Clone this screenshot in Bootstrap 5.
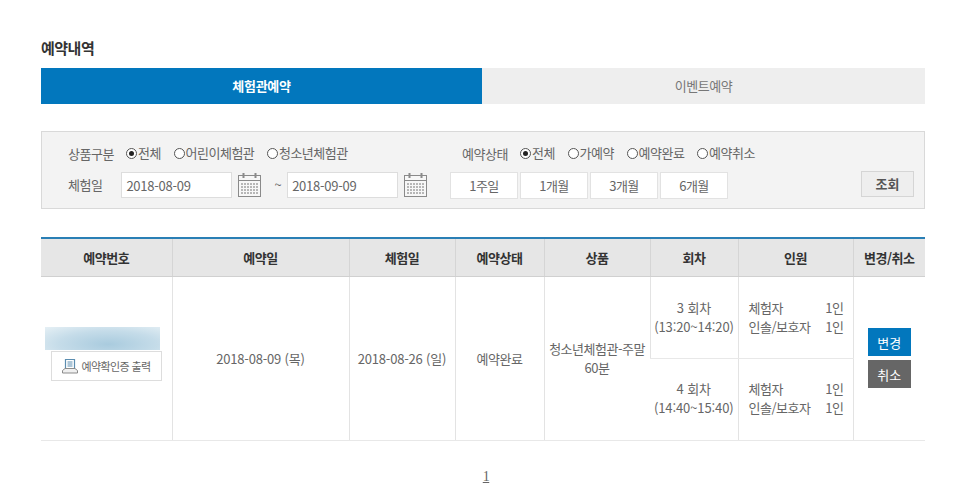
<!DOCTYPE html>
<html lang="ko">
<head>
  <meta charset="UTF-8">
  <title>예약내역</title>
  <link href="https://cdn.jsdelivr.net/npm/bootstrap@5.3.0/dist/css/bootstrap.min.css" rel="stylesheet">
  <script src="https://cdn.jsdelivr.net/npm/bootstrap@5.3.0/dist/js/bootstrap.bundle.min.js"></script>
  <style>
    body {
      font-family: "Noto Sans CJK KR", "Noto Sans", sans-serif;
      font-size: 13px;
      color: #666;
      background: #fff;
      letter-spacing: -0.5px;
    }
    .page-wrap { width: 884px; margin-left: 41px; padding-top: 38px; }
    .page-title { font-size: 15px; font-weight: 700; color: #333; line-height: 20px; margin: 0 0 10px; letter-spacing: -0.5px; }
    .tab-row { height: 36px; }
    .tab-item { display: flex; align-items: center; justify-content: center; text-decoration: none; }
    .tab-on { width: 441px; background: #0277bd; color: #fff; font-weight: 700; letter-spacing: -0.3px; }
    .tab-off { flex: 1; background: #eee; color: #777; }
    .filter-box {
      margin-top: 27px; height: 78px; background: #f3f3f3; border: 1px solid #d9d9d9;
      padding: 11px 10px 0 26px;
    }
    .filter-line { height: 20px; line-height: 20px; }
    .filter-line2 { height: 28px; margin-top: 9px; }
    .filter-left { width: 382px; flex: none; }
    .filter-label { margin-right: 9px; }
    .date-label { margin-right: 19px; }
    .radio-opt { margin-right: 9.5px; display: inline-flex; align-items: center; }
    .radio-mark {
      width: 11px; height: 11px; border: 1px solid #555; border-radius: 50%; margin-right: 1px;
      display: inline-block; background: #fff; position: relative;
    }
    .radio-mark.on::after {
      content: ""; position: absolute; left: 2px; top: 2px; width: 5px; height: 5px; border-radius: 50%; background: #222;
    }
    .status-group { margin-left: 12px; }
    .date-box {
      width: 111px; height: 26px; background: #fff; border: 1px solid #ddd; padding: 0 4px;
      font: inherit; color: #666; letter-spacing: -0.25px;
    }
    .cal-ico { width: 25px; height: 26px; margin-left: 5px; flex: none; }
    .tilde { margin: 0 6px 0 12px; }
    .period-btn {
      width: 68px; height: 27px; margin-right: 2px; background: #fff; border: 1px solid #e2e2e2;
      font: inherit; color: #666; padding: 0; letter-spacing: inherit;
    }
    .search-btn {
      width: 53px; height: 26px; background: #eee; border: 1px solid #d5d5d5;
      font: inherit; font-weight: 700; color: #555; padding: 0; margin-top: -1px;
    }
    .resv-table { width: 884px; margin-top: 28px; table-layout: fixed; border-collapse: collapse; border-top: 2px solid #2a7fb5; }
    .resv-table th {
      height: 38px; background: #e6e6e6; color: #333; font-weight: 700; text-align: center;
      border-left: 1px solid #d5d5d5; border-bottom: 1px solid #d0d0d0; padding: 0;
    }
    .resv-table td {
      text-align: center; vertical-align: middle; border-left: 1px solid #e3e3e3;
      border-bottom: 1px solid #e8e8e8; padding: 0; line-height: 19px; height: 82px;
    }
    .resv-table tr > :first-child { border-left: 0; }
    .resv-table td.lower-cell { padding-bottom: 2px; }
    .date-cell { letter-spacing: -0.2px; }
    .time-cell { letter-spacing: -0.1px; }
    .blur-num {
      width: 115px; height: 23px; margin-left: 4px;
      background: radial-gradient(ellipse at 55% 75%, #a9cbde 0%, #c5dce9 55%, #e6f0f5 100%);
    }
    .print-btn {
      width: 111px; height: 30px; margin: 1px 0 8px 10px; background: #fff; border: 1px solid #ddd;
      font: inherit; font-size: 11px; color: #666; padding: 0; letter-spacing: -0.6px;
      display: flex; align-items: center; justify-content: center; gap: 3px;
    }
    .print-ico { width: 16px; height: 16px; }
    .count-grid { width: 95px; margin-left: 10px; text-align: left; }
    .act-btn {
      display: block; width: 43px; height: 28px; line-height: 26px; margin: 0 auto; border: 0; padding: 0;
      color: #fff; font: inherit; font-size: 13px;
    }
    .act-blue { background: #0277bd; margin-bottom: 4px; }
    .act-gray { background: #666; }
    .pager { margin-top: 25px; padding-left: 6px; text-align: center; font-family: "Liberation Serif", serif; font-size: 14px; }
    .pager a { color: #666; }
  </style>
</head>
<body>
  <div class="page-wrap">
    <h1 class="page-title">예약내역</h1>

    <div class="tab-row d-flex">
      <a href="#" class="tab-item tab-on">체험관예약</a>
      <a href="#" class="tab-item tab-off">이벤트예약</a>
    </div>

    <div class="filter-box">
      <div class="d-flex filter-line">
        <div class="filter-left">
          <span class="filter-label">상품구분</span>
          <span class="radio-opt"><i class="radio-mark on"></i>전체</span>
          <span class="radio-opt"><i class="radio-mark"></i>어린이체험관</span>
          <span class="radio-opt"><i class="radio-mark"></i>청소년체험관</span>
        </div>
        <div class="status-group">
          <span class="filter-label">예약상태</span>
          <span class="radio-opt"><i class="radio-mark on"></i>전체</span>
          <span class="radio-opt"><i class="radio-mark"></i>가예약</span>
          <span class="radio-opt"><i class="radio-mark"></i>예약완료</span>
          <span class="radio-opt"><i class="radio-mark"></i>예약취소</span>
        </div>
      </div>
      <div class="d-flex filter-line2 align-items-start">
        <div class="filter-left d-flex align-items-center">
          <span class="date-label">체험일</span>
          <input class="date-box" type="text" value="2018-08-09">
          <svg class="cal-ico" viewBox="0 0 25 26" fill="none" stroke="#8a8a8a">
            <rect x="1.5" y="3.5" width="22" height="21" fill="#f7f7f7"/>
            <path d="M1.5 8.5h22" />
            <path d="M6.5 1v5M18.5 1v5" stroke-width="2"/>
            <path d="M4 12h17M4 15h17M4 18h17M4 21h17" stroke-dasharray="2 1" stroke="#777"/>
          </svg>
          <span class="tilde">~</span>
          <input class="date-box" type="text" value="2018-09-09">
          <svg class="cal-ico" viewBox="0 0 25 26" fill="none" stroke="#8a8a8a">
            <rect x="1.5" y="3.5" width="22" height="21" fill="#f7f7f7"/>
            <path d="M1.5 8.5h22" />
            <path d="M6.5 1v5M18.5 1v5" stroke-width="2"/>
            <path d="M4 12h17M4 15h17M4 18h17M4 21h17" stroke-dasharray="2 1" stroke="#777"/>
          </svg>
        </div>
        <button class="period-btn" type="button">1주일</button>
        <button class="period-btn" type="button">1개월</button>
        <button class="period-btn" type="button">3개월</button>
        <button class="period-btn" type="button">6개월</button>
        <button class="search-btn ms-auto" type="button">조회</button>
      </div>
    </div>

    <table class="resv-table">
      <colgroup>
        <col style="width:131px"><col style="width:177px"><col style="width:106px"><col style="width:89px">
        <col style="width:106px"><col style="width:88px"><col style="width:115px"><col style="width:72px">
      </colgroup>
      <thead>
        <tr>
          <th>예약번호</th><th>예약일</th><th>체험일</th><th>예약상태</th><th>상품</th><th>회차</th><th>인원</th><th>변경/취소</th>
        </tr>
      </thead>
      <tbody>
        <tr>
          <td rowspan="2">
            <div class="blur-num"></div>
            <button class="print-btn" type="button">
              <svg class="print-ico" viewBox="0 0 16 16" fill="none">
                <path d="M3.5 10V1.5h9V10" stroke="#5b8db0" stroke-width="1.2"/>
                <path d="M5.5 4h5M5.5 6h5M5.5 8h5" stroke="#5b8db0"/>
                <path d="M3 10.5h10l2.5 2v2.5H.5v-2.5z" fill="#f0f0f0" stroke="#8b8b8b"/>
              </svg>
              예약확인증 출력
            </button>
          </td>
          <td rowspan="2" class="date-cell">2018-08-09 (목)</td>
          <td rowspan="2" class="date-cell">2018-08-26 (일)</td>
          <td rowspan="2">예약완료</td>
          <td rowspan="2">청소년체험관-주말<br>60분</td>
          <td class="time-cell">3 회차<br>(13:20~14:20)</td>
          <td>
            <div class="count-grid">
              <div class="d-flex justify-content-between"><span>체험자</span><span>1인</span></div>
              <div class="d-flex justify-content-between"><span>인솔/보호자</span><span>1인</span></div>
            </div>
          </td>
          <td rowspan="2">
            <button class="act-btn act-blue" type="button">변경</button>
            <button class="act-btn act-gray" type="button">취소</button>
          </td>
        </tr>
        <tr>
          <td class="time-cell lower-cell">4 회차<br>(14:40~15:40)</td>
          <td class="lower-cell">
            <div class="count-grid">
              <div class="d-flex justify-content-between"><span>체험자</span><span>1인</span></div>
              <div class="d-flex justify-content-between"><span>인솔/보호자</span><span>1인</span></div>
            </div>
          </td>
        </tr>
      </tbody>
    </table>

    <div class="pager"><a href="#">1</a></div>
  </div>
</body>
</html>
